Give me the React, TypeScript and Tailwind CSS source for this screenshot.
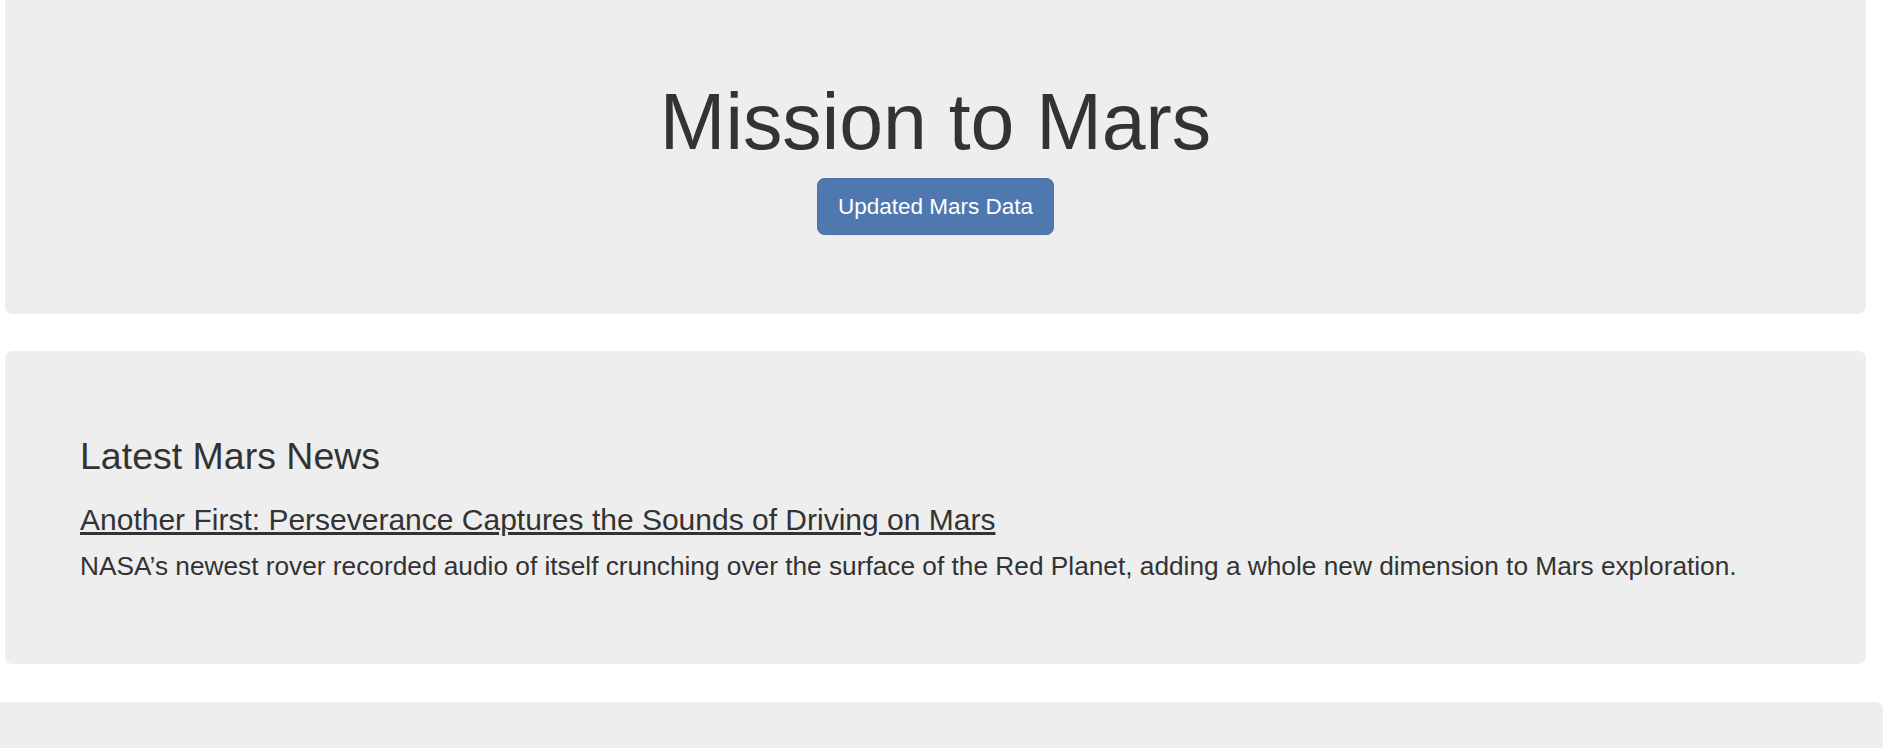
export default function App() {
    return (
        <div className="min-h-screen bg-white font-['Liberation_Sans',Arial,sans-serif] text-[#333]">
            <div className="pl-[5px] pr-[17px]">
                <div className="rounded-b-[7.5px] bg-[#eee] px-[75px] pt-[54px] pb-[60px] text-center">
                    <h1 className="mt-[25px] mb-[12.5px] text-[78.75px] leading-[1.1] font-normal">
                        Mission to Mars
                    </h1>
                    <p className="mb-[18.75px]">
                        <button className="rounded-[7.5px] border-[1.25px] border-[#4a71a8] bg-[#4f78b0] px-[20px] py-[12.5px] text-[22.5px] leading-[1.3333] text-white">
                            Updated Mars Data
                        </button>
                    </p>
                </div>

                <div className="mt-[37.5px] rounded-[7.5px] bg-[#eee] px-[75px] py-[60px]">
                    <h2 className="mt-[25px] mb-[12.5px] text-[37.5px] leading-[1.1] font-normal">
                        Latest Mars News
                    </h2>
                    <h3 className="mt-[25px] mb-[12.5px] text-[30px] leading-[1.1] font-normal">
                        <a href="#" className="text-[#333] underline">
                            Another First: Perseverance Captures the Sounds of Driving on Mars
                        </a>
                    </h3>
                    <p className="mb-[18.75px] text-[26.25px] leading-[1.42857]">
                        NASA’s newest rover recorded audio of itself crunching over the surface of the Red Planet, adding a whole new dimension to Mars exploration.
                    </p>
                </div>
            </div>

            <div className="mt-[37.5px] h-[200px] rounded-tr-[7.5px] bg-[#eee]" />
        </div>
    );
}
